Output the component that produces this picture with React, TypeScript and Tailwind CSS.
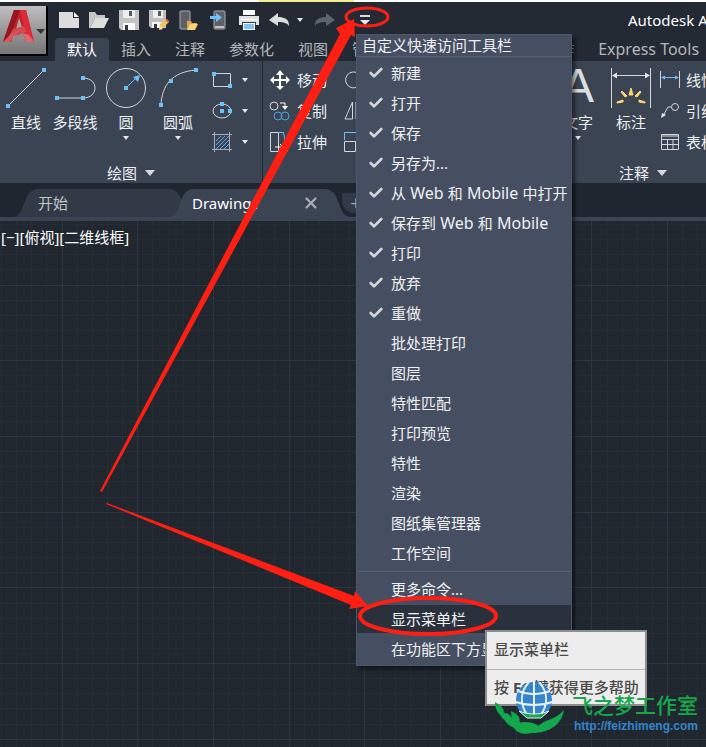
import type { ReactNode } from 'react';
import { Check, X } from 'lucide-react';

const ribbonTabs = ['默认', '插入', '注释', '参数化', '视图', '管理', '输出', '附加模块', '协作', 'Express Tools'];

const checkedItems: { id: string; label: ReactNode }[] = [
  { id: 'new', label: '新建' },
  { id: 'open', label: '打开' },
  { id: 'save', label: '保存' },
  { id: 'save-as', label: '另存为...' },
  {
    id: 'open-web',
    label: (
      <>
        从<span className="text-base leading-5"> Web </span>和<span className="text-base leading-5"> Mobile </span>中打开
      </>
    ),
  },
  {
    id: 'save-web',
    label: (
      <>
        保存到<span className="text-base leading-5"> Web </span>和<span className="text-base leading-5"> Mobile</span>
      </>
    ),
  },
  { id: 'plot', label: '打印' },
  { id: 'undo', label: '放弃' },
  { id: 'redo', label: '重做' },
];

const uncheckedItems = ['批处理打印', '图层', '特性匹配', '打印预览', '特性', '渲染', '图纸集管理器', '工作空间'];

const BLUE = '#6cc0fb';
const LINE = '#d4d6d9';

function Caret({ big = false }: { big?: boolean }) {
  return big ? (
    <svg width="10" height="6" viewBox="0 0 10 6" className="shrink-0">
      <path d="M0 0h10L5 6z" fill="#d8dadd" />
    </svg>
  ) : (
    <svg width="6" height="4" viewBox="0 0 6 4" className="shrink-0">
      <path d="M0 0h6L3 4z" fill="#e4e6e8" />
    </svg>
  );
}

function Dot({ x, y }: { x: number; y: number }) {
  return <rect x={x - 2} y={y - 2} width="4" height="4" fill={BLUE} />;
}

function Icon({ w = 20, h = 20, children }: { w?: number; h?: number; children: ReactNode }) {
  return (
    <svg width={w} height={h} viewBox={`0 0 ${w} ${h}`} fill="none" className="shrink-0">
      {children}
    </svg>
  );
}

const quickTools = [
  {
    label: '新建',
    icon: (
      <Icon>
        <path d="M0 2h14v6h6v10H0z" fill="#dcdcdc" />
        <path d="M15 2l5 5h-5z" fill="#f4f4f4" />
      </Icon>
    ),
  },
  {
    label: '打开',
    icon: (
      <Icon>
        <path d="M0 18V2h6l2 3h8v3H6L1 18z" fill="#c4c6c8" />
        <path d="M6 8h14l-5 10H1z" fill="#dedede" />
      </Icon>
    ),
  },
  {
    label: '保存',
    icon: (
      <Icon>
        <path d="M0 0h20v20H2l-2-2z" fill="#c4c4c4" />
        <path d="M4 0h12v8H4z" fill="#eeeeee" />
        <path d="M10 1h3v5h-3z" fill="#555a60" />
        <path d="M4 13h12v7H4z" fill="#f8f8f8" />
        <path d="M6 15h3v5H6z" fill="#33383f" />
      </Icon>
    ),
  },
  {
    label: '另存为',
    icon: (
      <Icon>
        <path d="M0 0h17v18H2l-2-2z" fill="#c0c0c0" />
        <path d="M4 0h10v8H4z" fill="#eeeeee" />
        <path d="M9 1h3v5H9z" fill="#555a60" />
        <path d="M3 12h11v6H3z" fill="#f4f4f4" />
        <path d="M5 14h3v4H5z" fill="#33383f" />
        <path d="M10 19l1-5 6-5 3 3-6 6z" fill="#f4c45c" />
        <path d="M16 10l2-1 2 2-1 2z" fill="#e2665e" />
        <path d="M10 20l1-4 3 3z" fill="#f3e3c4" />
      </Icon>
    ),
  },
  {
    label: '从移动设备打开',
    icon: (
      <Icon>
        <rect x="1" y="1" width="10" height="18" rx="1" fill="#5d6167" stroke="#a9abad" />
        <path d="M8 19v-8h4l1 2h5v2h-7z" fill="#dca848" />
        <path d="M11 14h8l-3 6H8z" fill="#fbd27a" />
      </Icon>
    ),
  },
  {
    label: '保存到移动设备',
    icon: (
      <Icon>
        <rect x="5" y="1" width="11" height="18" rx="1" fill="#5d6167" stroke="#a9abad" />
        <path d="M6 17h9" stroke="#bfc1c3" strokeWidth="2" />
        <path d="M1 6h6V3l6 4.500L7 12V9H1z" fill={BLUE} />
      </Icon>
    ),
  },
  {
    label: '打印',
    icon: (
      <Icon>
        <path d="M4 0h12v5H4z" fill="#ffffff" />
        <path d="M0 6h20v9H0z" fill="#e2e2e2" />
        <path d="M2 9h16v1H2z" fill="#ffffff" />
        <path d="M3 12h14v3H3z" fill="#383d45" />
        <path d="M4 13h12v7H4z" fill="#ffffff" />
        <path d="M5 14h10v5H5z" fill="#7dc2f5" />
      </Icon>
    ),
  },
  {
    label: '放弃',
    icon: (
      <Icon>
        <path d="M0 10l9-7v4c6 0 11 2 11 8v1c-2-3-5-4-11-4v4z" fill="#dcdcdc" />
      </Icon>
    ),
  },
];

function QuickAccessBar() {
  return (
    <div className="flex h-9 shrink-0 items-center pl-2">
      <div className="flex items-center gap-2.5">
        {quickTools.map((tool) => (
          <button key={tool.label} type="button" aria-label={tool.label}>
            {tool.icon}
          </button>
        ))}
      </div>
      <button type="button" aria-label="放弃历史" className="ml-2">
        <Caret />
      </button>
      <button type="button" aria-label="重做" className="ml-3">
        <Icon>
          <path d="M20 10l-9-7v4C5 7 0 9 0 15v1c2-3 5-4 11-4v4z" fill="#5e636b" />
        </Icon>
      </button>
      <button type="button" aria-label="自定义快速访问工具栏" className="ml-6">
        <Icon w={12} h={10}>
          <path d="M1 1h10" stroke="#d9dbde" strokeWidth="2" />
          <path d="M1 5h10l-5 5z" fill="#e8e9ea" />
        </Icon>
      </button>
      <span className="ml-auto w-[78px] shrink-0 overflow-hidden whitespace-nowrap text-white">
        Autodesk AutoCAD
      </span>
    </div>
  );
}

function AppButton() {
  return (
    <button
      type="button"
      aria-label="应用程序菜单"
      className="mt-1 flex h-[50px] w-12 shrink-0 items-start border-r-2 border-b-2 border-black bg-linear-to-b from-[#bfbfbf] to-[#757575]"
    >
      <svg width="46" height="44" viewBox="0 0 46 44">
        <path d="M3 36L14 4h12l8 32h-8l-3-9-10 3-2 6z" fill="#c41f2b" />
        <path d="M14 4h6L9 34l-6 2z" fill="#96161f" />
        <path d="M20 4h6l8 32-7-5z" fill="#dd2c37" />
        <path d="M19 12l3 9-6 2z" fill="#a8a8a8" />
        <path d="M13 23l11-3 3 6-19 6z" fill="#d8474e" />
        <path d="M3 36l8-8 11-5-9 8-3 5z" fill="#d8585e" />
        <path d="M26 36l-3-9 6 2 5 7z" fill="#e06a70" />
        <path d="M36 23h9l-4 5z" fill="#30353d" />
      </svg>
    </button>
  );
}

function LargeTool({
  label,
  icon,
  caret = false,
  className,
}: {
  label: string;
  icon: ReactNode;
  caret?: boolean;
  className?: string;
}) {
  return (
    <button type="button" className={`flex flex-col items-center whitespace-nowrap ${className ?? ''}`}>
      {icon}
      <span className="mt-1 leading-5">{label}</span>
      {caret && (
        <span className="mt-1 flex">
          <Caret />
        </span>
      )}
    </button>
  );
}

function SmallTool({ label, icon }: { label: string; icon: ReactNode }) {
  return (
    <button type="button" className="flex h-[31px] items-center gap-1.5 whitespace-nowrap">
      {icon}
      {label}
    </button>
  );
}

function ShapeTool({ label, icon }: { label: string; icon: ReactNode }) {
  return (
    <button type="button" aria-label={label} className="flex h-[31px] items-center gap-2.5">
      {icon}
      <Caret />
    </button>
  );
}

function DrawPanel() {
  return (
    <section className="flex w-[263px] shrink-0 flex-col border-r border-[#222933]">
      <div className="flex h-[101px] pt-[3px]">
        <LargeTool
          className="ml-1"
          label="直线"
          icon={
            <Icon w={44} h={44}>
              <path d="M4 42L40 6" stroke={LINE} />
              <Dot x={4} y={42} />
              <Dot x={40} y={6} />
            </Icon>
          }
        />
        <LargeTool
          className="ml-1"
          label="多段线"
          icon={
            <Icon w={46} h={44}>
              <path d="M5 34h26c16 0 16-20 0-20" stroke={LINE} />
              <Dot x={5} y={34} />
              <Dot x={31} y={34} />
              <Dot x={31} y={14} />
            </Icon>
          }
        />
        <LargeTool
          className="ml-1.5"
          label="圆"
          caret
          icon={
            <Icon w={44} h={44}>
              <circle cx="22" cy="24" r="19.500" stroke={LINE} />
              <path d="M22 24l9-9" stroke={BLUE} />
              <path d="M36 11l-2 7-5-5z" fill={BLUE} />
              <Dot x={22} y={24} />
            </Icon>
          }
        />
        <LargeTool
          className="ml-2"
          label="圆弧"
          caret
          icon={
            <Icon w={44} h={44}>
              <path d="M5 41C6 21 16 8 40 6" stroke={LINE} />
              <Dot x={5} y={41} />
              <Dot x={15} y={17} />
              <Dot x={40} y={6} />
            </Icon>
          }
        />
        <div className="ml-3 flex flex-col">
          <ShapeTool
            label="矩形"
            icon={
              <Icon>
                <path d="M1.500 3.500h17v13h-17z" stroke={LINE} />
                <Dot x={2} y={4} />
                <Dot x={18} y={16} />
              </Icon>
            }
          />
          <ShapeTool
            label="椭圆"
            icon={
              <Icon>
                <ellipse cx="10" cy="10" rx="9" ry="7" stroke={LINE} />
                <Dot x={10} y={3} />
                <Dot x={10} y={10} />
                <Dot x={18} y={10} />
              </Icon>
            }
          />
          <ShapeTool
            label="图案填充"
            icon={
              <Icon>
                <path d="M4 9l5-5M4 13l9-9M4 17L17 4M8 17l9-9M12 17l5-5" stroke="#58aef0" />
                <path d="M0 2.500h20M0 17.500h20M2.500 0v20M17.500 0v20" stroke="#a9adb4" />
              </Icon>
            }
          />
        </div>
      </div>
      <button type="button" className="flex h-[21px] items-center justify-center gap-2">
        绘图
        <Caret big />
      </button>
    </section>
  );
}

function ModifyPanel() {
  return (
    <section className="flex min-w-0 flex-1 gap-4 overflow-hidden pt-[3px] pl-1.5">
      <div className="flex flex-col">
        <SmallTool
          label="移动"
          icon={
            <Icon w={22}>
              <path
                d="M11 0l4 5h-3v4h5V6l4 4-4 4v-3h-5v5h3l-4 4-4-4h3v-5H5v3l-4-4 4-4v3h5V5H7z"
                fill="#ffffff"
              />
            </Icon>
          }
        />
        <SmallTool
          label="复制"
          icon={
            <Icon w={22}>
              <circle cx="5" cy="5" r="4" stroke={LINE} />
              <path d="M11 2h5v3" stroke="#ffffff" />
              <path d="M13 5h6l-3 4z" fill="#ffffff" />
              <circle cx="9" cy="15" r="4" stroke="#4fa3e0" />
              <circle cx="16" cy="15" r="4" stroke="#4fa3e0" />
            </Icon>
          }
        />
        <SmallTool
          label="拉伸"
          icon={
            <Icon w={22}>
              <path d="M1.500.5h8v19h-8z" stroke={LINE} />
              <path d="M9.500.5h5l4 19h-5" stroke={BLUE} />
              <path d="M6 15h8M11 12l3 3-3 3" stroke="#ffffff" />
            </Icon>
          }
        />
      </div>
      <div className="flex flex-col">
        <SmallTool
          label="旋转"
          icon={
            <Icon>
              <path d="M16 4a8 8 0 1 0 2 9" stroke={LINE} />
            </Icon>
          }
        />
        <SmallTool
          label="镜像"
          icon={
            <Icon>
              <path d="M9.500 1v17H2zM13 1l7 17h-7z" stroke={LINE} />
            </Icon>
          }
        />
        <SmallTool
          label="缩放"
          icon={
            <Icon>
              <path d="M1.500 8V.5h17V8" stroke={BLUE} />
              <path d="M1.500 9.500h11v10h-11z" stroke={LINE} />
            </Icon>
          }
        />
      </div>
    </section>
  );
}

function AnnotationPanel() {
  return (
    <section className="flex w-[148px] shrink-0 flex-col overflow-hidden">
      <div className="flex h-[101px] pt-[3px]">
        <LargeTool
          label="文字"
          caret
          className="w-10 shrink-0"
          icon={
            <span className="flex h-11 items-center font-['Liberation_Sans',sans-serif] text-5xl leading-none text-[#dcdddf]">
              A
            </span>
          }
        />
        <LargeTool
          label="标注"
          className="ml-3 shrink-0"
          icon={
            <Icon w={42} h={44}>
              <path d="M1.500 4v40M40.500 4v40" stroke={LINE} />
              <path d="M5 11.500h32" stroke={LINE} />
              <path d="M2 11.500l5-3v6zM40 11.500l-5-3v6z" fill="#e4e6e8" />
              <path
                d="M19 31l2-7 2 7zM15 33l-4-5 1-1 5 5zM27 33l4-5-1-1-5 5zM13 38l-6 1v-1l6-2zM29 38l6 1v-1l-6-2z"
                fill="#ffd56e"
                stroke="#ffd56e"
              />
            </Icon>
          }
        />
        <div className="ml-2 flex shrink-0 flex-col">
          <SmallTool
            label="线性"
            icon={
              <Icon>
                <path d="M.5 1v17M19.500 1v17" stroke={LINE} />
                <path d="M4 7.500h13" stroke={BLUE} />
                <path d="M1 7.500l4-2v4zM19 7.500l-4-2v4z" fill={BLUE} />
              </Icon>
            }
          />
          <SmallTool
            label="引线"
            icon={
              <Icon>
                <circle cx="15" cy="6" r="3.500" stroke={LINE} />
                <path d="M11 6H8l-5 9" stroke={LINE} />
                <path d="M1 17l1-5 4 2z" fill="#e4e6e8" />
              </Icon>
            }
          />
          <SmallTool
            label="表格"
            icon={
              <Icon>
                <path d="M1.500 2.500h17v15h-17zM1 7.500h18M1 12.500h18M7.500 7v11M13 7v11" stroke={LINE} />
                <path d="M2 3h16v2H2z" fill="#8b9098" />
              </Icon>
            }
          />
        </div>
      </div>
      <button type="button" className="ml-[61px] flex h-[21px] items-center gap-2">
        注释
        <Caret big />
      </button>
    </section>
  );
}

function TabShape({ className }: { className: string }) {
  return (
    <svg viewBox="0 0 180 28" preserveAspectRatio="none" className={`absolute inset-0 h-full w-full ${className}`}>
      <path d="M0 28C12 26 8 0 24 0h130c18 0 12 26 26 28z" fill="currentColor" />
    </svg>
  );
}

function DocumentTabs() {
  return (
    <div className="flex h-[38px] items-end overflow-hidden border-b-4 border-[#3b4453] bg-[#20262f]">
      <div className="relative ml-3.5 flex h-7 w-[180px] shrink-0 items-center pl-6 text-[#c3c6ca]">
        <TabShape className="text-[#323a47]" />
        <button type="button" className="relative">
          开始
        </button>
      </div>
      <div className="relative -ml-6 flex h-7 w-[180px] shrink-0 items-center justify-between pr-[30px] pl-[22px] text-white">
        <TabShape className="text-[#3b4453]" />
        <button type="button" className="relative">
          Drawing1
        </button>
        <button type="button" aria-label="关闭" className="relative">
          <X size={18} strokeWidth={3} className="text-[#a9adb3]" />
        </button>
      </div>
      <button
        type="button"
        aria-label="新图形"
        className="mb-1 -ml-2 h-5 w-7 shrink-0 rounded-bl-xl bg-[#323a47] text-xl leading-4 text-[#a9adb3]"
      >
        +
      </button>
    </div>
  );
}

function DrawingGrid() {
  const lines = Array.from({ length: 200 }, (_, i) => ({ pos: Math.round((i * 757) / 50), major: i % 5 === 4 }));
  return (
    <svg className="absolute inset-0 h-full w-full" fill="none" shapeRendering="crispEdges">
      {lines
        .filter((line) => !line.major)
        .map(({ pos }) => (
          <path key={pos} d={`M${pos + 1} 0v3000M0 ${pos + 3}h3000`} stroke="#262d36" />
        ))}
      {lines
        .filter((line) => line.major)
        .map(({ pos }) => (
          <path key={pos} d={`M${pos + 1} 0v3000M0 ${pos + 3}h3000`} stroke="#2e3545" />
        ))}
    </svg>
  );
}

function MenuItem({ label, checked = false, active = false }: { label: ReactNode; checked?: boolean; active?: boolean }) {
  return (
    <button
      type="button"
      role="menuitem"
      className={`flex w-full items-center whitespace-nowrap ${active ? 'my-px h-7 bg-[#2a313c]' : 'h-[30px]'}`}
    >
      <span className="flex w-[34px] shrink-0 justify-center pl-1">
        {checked && <Check size={16} strokeWidth={4} className="text-[#d5d7da]" />}
      </span>
      <span className="whitespace-pre">{label}</span>
    </button>
  );
}

function CustomizeMenu() {
  return (
    <div
      role="menu"
      className="absolute top-[34px] left-[356px] w-[216px] overflow-hidden border border-[#4d576a] bg-[#464e61] pb-px text-[#f0f1f3] shadow-[3px_3px_4px_rgba(0,0,0,0.5)]"
    >
      <div className="mb-px h-[22px] border-b border-[#566173] pl-[5px] leading-[21px]">自定义快速访问工具栏</div>
      {checkedItems.map((item) => (
        <MenuItem key={item.id} label={item.label} checked />
      ))}
      {uncheckedItems.map((label) => (
        <MenuItem key={label} label={label} />
      ))}
      <div className="my-0.5 h-0.5 border-b border-[#566173]" />
      <MenuItem label="更多命令..." />
      <MenuItem label="显示菜单栏" active />
      <MenuItem label="在功能区下方显示" />
    </div>
  );
}

function Tooltip() {
  return (
    <div
      role="tooltip"
      className="absolute top-[630px] left-[485px] w-[162px] border-2 border-[#8d8d8d] bg-[#ededed] whitespace-nowrap text-[#4a4a4a]"
    >
      <p className="h-[38px] border-b border-[#b4b4b4] pt-[7px] pl-[7px] font-medium">显示菜单栏</p>
      <p className="h-[34px] pt-[7px] pl-[7px] font-medium">
        按 <b>F1</b> 键获得更多帮助
      </p>
    </div>
  );
}

// red hand-drawn marks pointing at the toolbar arrow and the menu entry
function Annotations() {
  return (
    <svg width="510" height="650" viewBox="0 0 510 650" fill="none" className="pointer-events-none absolute top-0 left-0">
      <g fill="#ff1f12">
        <path d="M100 491L340 34l-4-6 18-9 1 18-4-2L102 492z" />
        <path d="M107 503l247 93 1-5 13 15-19 3 2-4-245-101z" />
      </g>
      <ellipse cx="367" cy="17" rx="21" ry="9" stroke="#ff1f12" strokeWidth="3" />
      <ellipse cx="428" cy="616" rx="68" ry="18" stroke="#ff1f12" strokeWidth="4" />
    </svg>
  );
}

function Watermark() {
  return (
    <div className="absolute top-[682px] left-[494px] flex whitespace-nowrap">
      <svg width="72" height="52" viewBox="0 0 72 52" fill="none" className="shrink-0">
        <circle cx="40" cy="18" r="18" fill="#3485cc" />
        <path
          d="M40 0v36M24 9c10 4 22 4 32 0M22 20c11 4 25 4 36 0M35 0c-9 10-9 22-2 33M45 0c9 10 9 22 2 33"
          stroke="#e9f1f8"
          strokeWidth="2"
        />
        <path d="M25 29c9 4 21 4 30 0l-8 7H33z" fill="#12a84b" stroke="#e9f1f8" />
        <path
          d="M1 20c5 3 9 6 9 11 5 0 9 4 9 9-6 0-9-1-12-6-4-4-6-8-6-14zM17 29c7 3 10 7 8 12 7-1 11 2 14 6-6 3-12 1-16-4-4-3-6-8-6-14zM10 37c8-2 14 0 18 5 5-1 9-1 14 3l-4 6c-8 2-15 0-18-5-5-2-8-5-10-9zM70 28c-2 13-13 23-32 23 4-6 7-8 12-11 7-3 15-6 20-12zM28 40c8 0 14 1 18 5l-6 5c-6-1-10-4-12-10z"
          fill="#12a84b"
        />
      </svg>
      <div className="pt-2">
        <p className="pl-1.5 font-['Noto_Sans_CJK_SC',sans-serif] text-[21px] leading-7 font-medium text-[#12a84b]">
          飞之梦工作室
        </p>
        <a
          href="http://feizhimeng.com"
          className="block pl-2 font-['Liberation_Sans',sans-serif] text-xs leading-4 font-bold text-[#3485cc]"
        >
          http://feizhimeng.com
        </a>
      </div>
    </div>
  );
}

export default function App() {
  return (
    <div className="relative flex min-h-screen flex-col overflow-hidden bg-[#21272f] font-['Noto_Sans','Noto_Sans_CJK_SC',sans-serif] text-[15px] leading-5 text-[#eceef0]">
      <div className="flex h-0.5 bg-white">
        <div className="ml-[259px] w-[95px] bg-[#f3ee91]" />
      </div>
      <header className="flex h-[59px] bg-[#232a34]">
        <AppButton />
        <div className="flex min-w-0 flex-1 flex-col pl-[3px]">
          <QuickAccessBar />
          <nav className="ml-1 flex h-[23px] overflow-hidden whitespace-nowrap text-[#b3b6bb]">
            {ribbonTabs.map((tab, i) => (
              <button
                key={tab}
                type="button"
                className={`shrink-0 px-3 pb-0.5 last:text-base last:leading-5 ${i === 0 ? 'rounded-t bg-[#3b4453] text-white' : ''}`}
              >
                {tab}
              </button>
            ))}
          </nav>
        </div>
      </header>
      <div className="flex h-[122px] bg-[#3b4453]">
        <DrawPanel />
        <ModifyPanel />
        <AnnotationPanel />
      </div>
      <DocumentTabs />
      <main className="relative flex-1">
        <DrawingGrid />
        <p className="relative pt-1.5 pl-px text-white">[−][俯视][二维线框]</p>
      </main>
      <CustomizeMenu />
      <Tooltip />
      <Annotations />
      <Watermark />
    </div>
  );
}
